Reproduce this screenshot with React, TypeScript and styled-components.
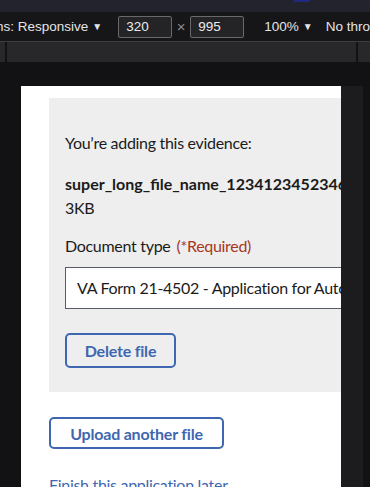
import React from 'react';
import styled, { createGlobalStyle } from 'styled-components';

const GlobalStyle = createGlobalStyle`
  html, body {
    margin: 0;
    padding: 0;
    background: #121214;
    overflow: hidden;
  }
`

const Shell = styled.div`
  width: 370px;
  height: 487px;
  display: flex;
  flex-direction: column;
  overflow: hidden;
  background: #121214;
`

const TopStrip = styled.div`
  height: 12px;
  background: #22232c;
  flex-shrink: 0;
  position: relative;
`

const TabMark = styled.span`
  position: absolute;
  left: 294px;
  top: 0;
  width: 16px;
  height: 2px;
  background: #1e2a80;
`

const Toolbar = styled.div`
  height: 29px;
  flex-shrink: 0;
  display: flex;
  align-items: center;
  background: #161618;
  border-bottom: 1px solid #3c3c3e;
  font-family: "Liberation Sans", Arial, sans-serif;
  font-size: 13.5px;
  color: #e4e4e6;
  white-space: nowrap;
`

const ToolText = styled.span<{ $ml: number }>`
  display: flex;
  align-items: center;
  margin-left: ${p => p.$ml}px;
`

const Caret = styled.span`
  font-size: 10px;
  margin-left: 4px;
`

const SizeInput = styled.span`
  box-sizing: border-box;
  width: 54px;
  height: 22px;
  padding-left: 7px;
  display: flex;
  align-items: center;
  background: #242426;
  border: 1px solid #69696b;
  border-radius: 2px;
  color: #ececee;
`

const Times = styled.span`
  width: 18px;
  text-align: center;
  color: #8a8a8c;
  font-size: 15px;
`

const RulerRow = styled.div`
  height: 20px;
  flex-shrink: 0;
  background: #28282a;
  display: flex;
  justify-content: space-between;
  padding: 0 12px 0 5px;
`

const RulerLine = styled.span`
  width: 2px;
  background: #121214;
`

const Stage = styled.div`
  flex: 1;
  display: flex;
  padding: 24px 0 0 21px;
`

const Page = styled.div`
  width: 320px;
  flex-shrink: 0;
  background: #ffffff;
  overflow: hidden;
  padding: 12px 0 0 28px;
  box-sizing: border-box;
  font-family: "Source Sans Pro", Lato, "Noto Sans", sans-serif;
  font-size: 16px;
  line-height: 24px;
  letter-spacing: -0.3px;
  color: #1b1b1b;
`

const Gutter = styled.div`
  width: 22px;
  background: #1c1c1e;
`

const EvidencePanel = styled.div`
  width: 420px;
  background: #eeeeee;
  padding: 33px 16px 24px;
  box-sizing: border-box;
`

const Para = styled.p<{ $mt?: number }>`
  margin: ${p => p.$mt ?? 0}px 0 0;
  white-space: nowrap;
`

const FileName = styled(Para)`
  font-weight: 700;
  letter-spacing: 0;
`

const Label = styled.div`
  margin-top: 14px;
  white-space: nowrap;
`

const Required = styled.span`
  color: #a93622;
  margin-left: 6px;
`

const Select = styled.div`
  box-sizing: border-box;
  height: 42px;
  margin-top: 9px;
  display: flex;
  align-items: center;
  padding-left: 11px;
  background: #ffffff;
  border: 1px solid #565c65;
  white-space: nowrap;
`

const OutlineButton = styled.button<{ $h: number; $w: number; $mt: number }>`
  display: block;
  box-sizing: border-box;
  width: ${p => p.$w}px;
  height: ${p => p.$h}px;
  margin-top: ${p => p.$mt}px;
  padding: 0;
  background: transparent;
  border: 2px solid #3f67b1;
  border-radius: 5px;
  color: #3f67b1;
  font-family: inherit;
  font-size: 16px;
  font-weight: 700;
  letter-spacing: -0.2px;
`

const FinishLink = styled.a`
  display: block;
  margin-top: 24px;
  color: #3f67b1;
  white-space: nowrap;
`

export default function App() {
  return (
    <Shell>
      <GlobalStyle />
      <TopStrip>
        <TabMark />
      </TopStrip>
      <Toolbar>
        <ToolText $ml={-4}>ns: Responsive<Caret>▼</Caret></ToolText>
        <ToolText $ml={16}>
          <SizeInput>320</SizeInput>
          <Times>×</Times>
          <SizeInput>995</SizeInput>
        </ToolText>
        <ToolText $ml={20}>100%<Caret>▼</Caret></ToolText>
        <ToolText $ml={13}>No throttling</ToolText>
      </Toolbar>
      <RulerRow>
        <RulerLine />
        <RulerLine />
      </RulerRow>
      <Stage>
        <Page>
          <EvidencePanel>
            <Para>You’re adding this evidence:</Para>
            <FileName $mt={17}>super_long_file_name_12341234523462345634567.pdf</FileName>
            <Para>3KB</Para>
            <Label>
              Document type<Required>(*Required)</Required>
            </Label>
            <Select>VA Form 21-4502 - Application for Automobile or Other Conveyance</Select>
            <OutlineButton $w={111} $h={35} $mt={24}>Delete file</OutlineButton>
          </EvidencePanel>
          <OutlineButton $w={175} $h={32} $mt={25}>Upload another file</OutlineButton>
          <FinishLink href="#">Finish this application later</FinishLink>
        </Page>
        <Gutter />
      </Stage>
    </Shell>
  );
}
